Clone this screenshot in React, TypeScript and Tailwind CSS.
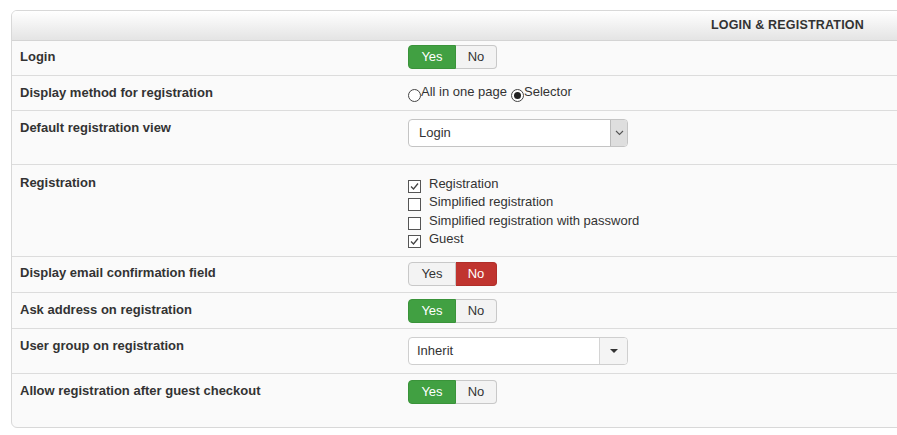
import type { ReactNode } from "react";

type RowProps = {
  label: string;
  h: string;
  labelPt: string;
  ctrlPt: string;
  last?: boolean;
  children: ReactNode;
};

const Row = ({ label, h, labelPt, ctrlPt, last, children }: RowProps) => (
  <div className={`flex ${h} ${last ? "" : "border-b border-[#dcdcdc]"}`}>
    <div className={`w-[396px] pl-[8px] ${labelPt} font-bold text-[#333] leading-[18px]`}>{label}</div>
    <div className={`flex-1 ${ctrlPt}`}>{children}</div>
  </div>
);

const Toggle = ({ value }: { value: "yes" | "no" }) => (
  <div className="flex h-[24px] w-[89px] text-[13px] leading-[22px]">
    <div
      className={`w-[48px] text-center rounded-l-[4px] border ${
        value === "yes"
          ? "bg-[#41a042] border-[#3a933a] text-white"
          : "bg-[#f3f3f3] border-[#c8c8c8] text-[#333]"
      }`}
    >
      Yes
    </div>
    <div
      className={`w-[41px] text-center rounded-r-[4px] border border-l-0 ${
        value === "no"
          ? "bg-[#c0342f] border-[#b02e29] text-white"
          : "bg-[#f3f3f3] border-[#c8c8c8] text-[#333]"
      }`}
    >
      No
    </div>
  </div>
);

const Check = ({ checked, label }: { checked?: boolean; label: string }) => (
  <div className="flex h-[18px] items-start">
    <div className="mt-[5px] w-[13px] h-[13px] border border-[#555] bg-white flex items-center justify-center">
      {checked && (
        <svg width="11" height="11" viewBox="0 0 11 11">
          <path d="M2 5.5 L4.5 8 L9 2.5" fill="none" stroke="#444" strokeWidth="1.3" />
        </svg>
      )}
    </div>
    <span className="ml-[8px] text-[13px] leading-[18px] text-[#333]">{label}</span>
  </div>
);

const Radio = ({ checked }: { checked?: boolean }) => (
  <span className="inline-flex w-[13px] h-[13px] mt-[6px] rounded-full border border-[#444] bg-white items-center justify-center">
    {checked && <span className="w-[7px] h-[7px] rounded-full bg-[#222]" />}
  </span>
);

export default function App() {
  return (
    <div
      className="w-[897px] h-[435px] overflow-hidden bg-white text-[13px]"
      style={{ fontFamily: '"Liberation Sans", Arial, sans-serif' }}
    >
      <div className="ml-[11px] mt-[10px] w-[900px] border border-[#d8d8d8] rounded-[6px] bg-[#fafafa] overflow-hidden">
        <div className="h-[30px] border-b border-[#d4d4d4] bg-gradient-to-b from-[#ffffff] to-[#e4e4e4] flex items-center justify-end pr-[46px]">
          <span className="font-bold text-[12.5px] text-[#333] tracking-[0.2px]">LOGIN &amp; REGISTRATION</span>
        </div>

        <Row label="Login" h="h-[35px]" labelPt="pt-[7px]" ctrlPt="pt-[4px]">
          <Toggle value="yes" />
        </Row>

        <Row label="Display method for registration" h="h-[35px]" labelPt="pt-[8px]" ctrlPt="pt-[7px]">
          <div className="flex text-[13px] leading-[18px] text-[#333]">
            <Radio />
            <span>All in one page</span>
            <span className="ml-[4px]" />
            <Radio checked />
            <span>Selector</span>
          </div>
        </Row>

        <Row label="Default registration view" h="h-[54px]" labelPt="pt-[8px]" ctrlPt="pt-[8px]">
          <div className="flex w-[220px] h-[28px] border border-[#c4c4c4] rounded-[4px] bg-white overflow-hidden">
            <div className="flex-1 pl-[10px] leading-[26px] text-[#333]">Login</div>
            <div className="w-[17px] bg-[#dedede] border-l border-[#bbb] flex items-center justify-center">
              <svg width="9" height="6" viewBox="0 0 9 6">
                <path d="M1 1 L4.5 4.5 L8 1" fill="none" stroke="#555" strokeWidth="1.1" />
              </svg>
            </div>
          </div>
        </Row>

        <Row label="Registration" h="h-[92px]" labelPt="pt-[9px]" ctrlPt="pt-[10px]">
          <div className="flex flex-col gap-[0.4px]">
            <Check checked label="Registration" />
            <Check label="Simplified registration" />
            <Check label="Simplified registration with password" />
            <Check checked label="Guest" />
          </div>
        </Row>

        <Row label="Display email confirmation field" h="h-[36px]" labelPt="pt-[7px]" ctrlPt="pt-[5px]">
          <Toggle value="no" />
        </Row>

        <Row label="Ask address on registration" h="h-[36px]" labelPt="pt-[8px]" ctrlPt="pt-[6px]">
          <Toggle value="yes" />
        </Row>

        <Row label="User group on registration" h="h-[45px]" labelPt="pt-[8px]" ctrlPt="pt-[8px]">
          <div className="flex w-[220px] h-[28px] border border-[#cfcfcf] rounded-[4px] bg-white overflow-hidden">
            <div className="flex-1 pl-[8px] leading-[26px] text-[#333]">Inherit</div>
            <div className="w-[28px] bg-[#f4f4f4] border-l border-[#d4d4d4] flex items-center justify-center">
              <svg width="8" height="4" viewBox="0 0 8 4">
                <path d="M0 0 L8 0 L4 4 Z" fill="#333" />
              </svg>
            </div>
          </div>
        </Row>

        <Row label="Allow registration after guest checkout" h="h-[53px]" labelPt="pt-[8px]" ctrlPt="pt-[6px]" last>
          <Toggle value="yes" />
        </Row>
      </div>
    </div>
  );
}
